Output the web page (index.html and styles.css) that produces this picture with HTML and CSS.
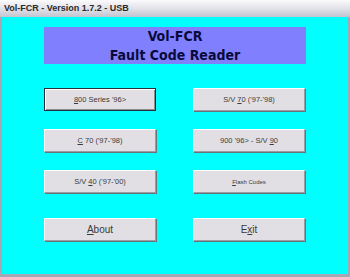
FILE: index.html
```html
<!DOCTYPE html>
<html lang="en">
<head>
    <meta charset="UTF-8">
    <title>Vol-FCR - Version 1.7.2 - USB</title>
    <link rel="stylesheet" href="styles.css">
</head>
<body>
    <div class="window">
        <div class="title-bar">Vol-FCR - Version 1.7.2 - USB</div>
        <div class="client">
            <div class="banner">
                <div>Vol-FCR</div>
                <div>Fault Code Reader</div>
            </div>
            <div class="buttons">
                <button class="btn default"><u>8</u>00 Series '96&gt;</button>
                <button class="btn">S/V <u>7</u>0 ('97-'98)</button>
                <button class="btn"><u>C</u> 70 ('97-'98)</button>
                <button class="btn">900 '96&gt; - S/V <u>9</u>0</button>
                <button class="btn">S/V <u>4</u>0 ('97-'00)</button>
                <button class="btn small"><u>F</u>lash Codes</button>
                <button class="btn last"><u>A</u>bout</button>
                <button class="btn last">E<u>x</u>it</button>
            </div>
        </div>
    </div>
</body>
</html>
```

FILE: styles.css
```css
* {
    box-sizing: border-box;
    margin: 0;
    padding: 0;
}

body {
    width: 350px;
    height: 277px;
    overflow: hidden;
    background-color: #a6a6b4;
}

.window {
    width: 350px;
    height: 277px;
    display: flex;
    flex-direction: column;
}

.title-bar {
    height: 17px;
    padding-left: 4px;
    line-height: 17px;
    font-family: 'Liberation Sans', Arial, sans-serif;
    font-size: 9px;
    font-weight: bold;
    color: #2a2a2a;
    background: linear-gradient(#fbfbfd, #dcdce4 60%, #c4c4d0);
}

.client {
    flex: 1;
    margin: 0 2px 3px 2px;
    background-color: #00ffff;
    padding: 10px 0 0 42px;
}

.banner {
    width: 262px;
    height: 37px;
    background-color: #8080ff;
    color: #0a0a3a;
    font-family: 'DejaVu Sans Condensed', 'Liberation Sans', sans-serif;
    font-stretch: condensed;
    font-weight: bold;
    font-size: 14px;
    line-height: 19px;
    text-align: center;
}

.buttons {
    display: grid;
    grid-template-columns: 112px 112px;
    column-gap: 37px;
    row-gap: 18px;
    margin-top: 24px;
}

.btn {
    height: 23px;
    background-color: #e1dfe4;
    border: 1px solid;
    border-color: #ffffff #9c9ca4 #9c9ca4 #ffffff;
    box-shadow: 1px 1px 0 #6a7478;
    font-family: 'Liberation Sans', Arial, sans-serif;
    font-size: 7.5px;
    color: #3a3a3a;
}

.btn.default {
    border: 1px solid #203040;
    box-shadow: inset 1px 1px 0 #ffffff, inset -1px -1px 0 #8c8c90;
}

.btn.small {
    font-size: 6px;
}

.btn.last {
    margin-top: 7px;
    font-size: 10px;
}
```
